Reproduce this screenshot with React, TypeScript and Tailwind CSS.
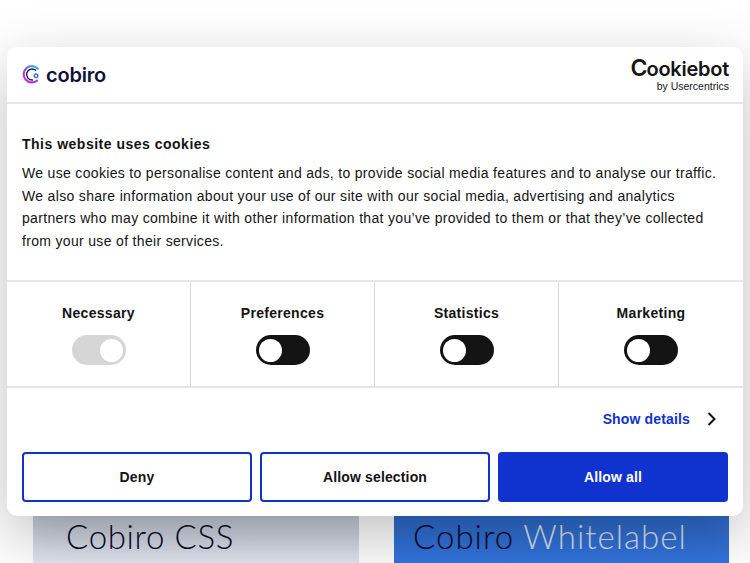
import React from "react";

function CobiroMark() {
  return (
    <svg width="19" height="19" viewBox="0 0 20 20" fill="none" className="shrink-0">
      <defs>
        <linearGradient id="cg" x1="2" y1="18" x2="18" y2="2" gradientUnits="userSpaceOnUse">
          <stop offset="0" stopColor="#f01cc0" />
          <stop offset="0.45" stopColor="#8a4be8" />
          <stop offset="1" stopColor="#2fc0f5" />
        </linearGradient>
      </defs>
      <path d="M16.8 4A8.6 8.6 0 1 0 15.8 16.4" stroke="url(#cg)" strokeWidth="2.2" strokeLinecap="round" />
      <path d="M14.4 5.6A5.8 5.8 0 1 0 11 15.8" stroke="#12123a" strokeWidth="1.4" strokeLinecap="round" />
      <circle cx="14.8" cy="11.4" r="1.9" stroke="#3f6fe0" strokeWidth="1.5" />
    </svg>
  );
}

function Toggle({ on, disabled }: { on?: boolean; disabled?: boolean }) {
  return (
    <div
      className={`flex h-[30px] w-[54px] items-center rounded-full px-[3px] ${on ? "justify-end" : "justify-start"} ${
        disabled ? "bg-[#d6d6d6]" : "bg-[#141414]"
      }`}
    >
      <div className="h-[23px] w-[23px] rounded-full bg-white" />
    </div>
  );
}

function Cell({ label, on, disabled, last }: { label: string; on?: boolean; disabled?: boolean; last?: boolean }) {
  return (
    <div className={`flex w-[184px] flex-col items-center pt-[21px] ${last ? "" : "border-r border-[#d6d6d6]"}`}>
      <div className="text-[14px] leading-[20px] font-bold tracking-[0.3px] text-[#141414]">{label}</div>
      <div className="mt-[12px]">
        <Toggle on={on} disabled={disabled} />
      </div>
    </div>
  );
}

function Btn({ children, primary }: { children: React.ReactNode; primary?: boolean }) {
  return (
    <button
      className={`h-[50px] flex-1 rounded-[4px] border-2 border-[#1032cf] text-[14px] font-bold tracking-[0.15px] ${
        primary ? "bg-[#1032cf] text-white" : "bg-white text-[#141414]"
      }`}
    >
      {children}
    </button>
  );
}

export default function App() {
  return (
    <div className="relative h-[563px] w-[750px] overflow-hidden bg-white font-['Liberation_Sans',sans-serif]">
      <div className="flex gap-[35px] pl-[33px] pt-[516px]">
        <div className="h-[60px] w-[326px] bg-[linear-gradient(180deg,#c3c8d4,#eaeffb)] pl-[33px] pt-[1px] font-['Lato',sans-serif] text-[33px] leading-[38px] font-light tracking-[0.65px] text-[#060a28]">
          Cobiro CSS
        </div>
        <div className="h-[60px] w-[335px] bg-[linear-gradient(180deg,#2f6ac9,#3478e6)] pl-[19px] pt-[1px] font-['Lato',sans-serif] text-[33px] leading-[38px] font-light tracking-[1px] text-[#060a28]">
          Cobiro <span className="text-[#d8e0ee]">Whitelabel</span>
          <br />
          CSS
        </div>
      </div>

      <div className="absolute left-[7px] top-[47px] h-[469px] w-[736px] rounded-[10px] bg-white text-[#141414] shadow-[0_20px_60px_rgba(0,0,0,0.25)]">
        <div className="flex h-[57px] items-center justify-between border-b-2 border-[#e6e6e6] pl-[15px] pr-[14px]">
          <div className="flex items-center gap-[5px]">
            <CobiroMark />
            <span className="font-['Inter',sans-serif] text-[20px] leading-none font-semibold tracking-[-0.2px] text-[#10103a]">cobiro</span>
          </div>
          <div className="flex flex-col items-end">
            <span className="flex items-baseline font-['Inter',sans-serif] font-semibold text-[#141414]">
              <span className="text-[23px] leading-[20px] tracking-[-1px]">C</span>
              <span className="text-[20px] leading-[20px] tracking-[-0.25px]">ookiebot</span>
            </span>
            <span className="mt-[2px] text-[10.5px] leading-[10px] text-[#141414]">by Usercentrics</span>
          </div>
        </div>

        <div className="h-[178px] border-b-2 border-[#e6e6e6] pl-[15px] pr-[15px] pt-[30px]">
          <div className="text-[14px] leading-[20px] font-bold tracking-[0.5px]">This website uses cookies</div>
          <p className="mt-[8px] text-[14px] leading-[22.5px] tracking-[0.325px] text-[#141414]">
            We use cookies to personalise content and ads, to provide social media features and to analyse our traffic.
            We also share information about your use of our site with our social media, advertising and analytics
            partners who may combine it with other information that you’ve provided to them or that they’ve collected
            from your use of their services.
          </p>
        </div>

        <div className="flex h-[106px] border-b-2 border-[#e6e6e6]">
          <Cell label="Necessary" on disabled />
          <Cell label="Preferences" />
          <Cell label="Statistics" />
          <Cell label="Marketing" last />
        </div>

        <div className="flex h-[62px] items-center justify-end pr-[25px]">
          <span className="text-[14px] font-bold tracking-[0.15px] text-[#1032cf]">Show details</span>
          <svg width="12" height="14" viewBox="0 0 12 14" fill="none" className="ml-[16px]">
            <path d="M2.5 1 8.5 7l-6 6" stroke="#141414" strokeWidth="2" />
          </svg>
        </div>

        <div className="mt-[2px] flex gap-[8px] px-[15px]">
          <Btn>Deny</Btn>
          <Btn>Allow selection</Btn>
          <Btn primary>Allow all</Btn>
        </div>
      </div>
    </div>
  );
}
